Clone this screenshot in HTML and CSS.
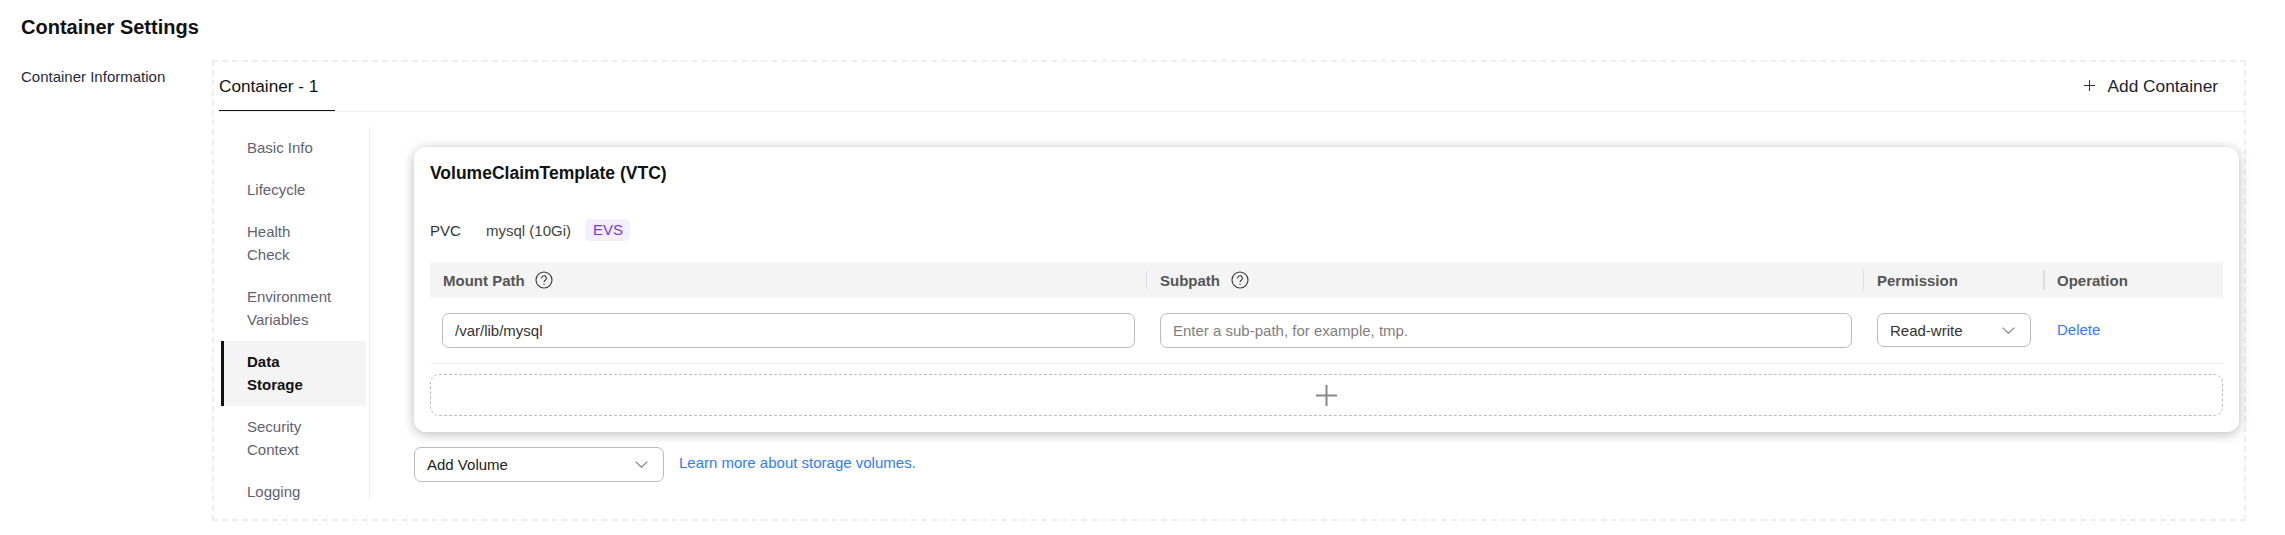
FILE: index.html
```html
<!DOCTYPE html>
<html lang="en">
<head>
<meta charset="utf-8">
<title>Container Settings</title>
<link rel="stylesheet" href="styles.css">
</head>
<body>
<h1 class="page-title">Container Settings</h1>
<div class="form-row">
  <div class="form-label">Container Information</div>
  <div class="box">
    <div class="tabs">
      <div class="tab">Container - 1</div>
      <div class="add-container">
        <svg class="add-icon" viewBox="0 0 11 11"><path d="M5.5 0v11M0 5.5h11"/></svg>
        <span>Add Container</span>
      </div>
    </div>
    <div class="body">
      <ul class="nav">
        <li class="nav-item">Basic Info</li>
        <li class="nav-item">Lifecycle</li>
        <li class="nav-item">Health<br>Check</li>
        <li class="nav-item">Environment<br>Variables</li>
        <li class="nav-item active">Data<br>Storage</li>
        <li class="nav-item">Security<br>Context</li>
        <li class="nav-item">Logging</li>
      </ul>
      <div class="main">
        <div class="card">
          <div class="card-title">VolumeClaimTemplate (VTC)</div>
          <div class="pvc">
            <span class="pvc-label">PVC</span>
            <span class="pvc-name">mysql (10Gi)</span>
            <span class="tag">EVS</span>
          </div>
          <div class="grid head">
            <div class="th th-first">Mount Path
              <svg class="help help-first" viewBox="0 0 18 18"><circle cx="9" cy="9" r="8"/><path d="M6.6 7.2a2.4 2.4 0 1 1 3.7 2c-.9.6-1.3 1-1.3 1.9M9 12.4v1.3"/></svg>
            </div>
            <div class="th">Subpath
              <svg class="help" viewBox="0 0 18 18"><circle cx="9" cy="9" r="8"/><path d="M6.6 7.2a2.4 2.4 0 1 1 3.7 2c-.9.6-1.3 1-1.3 1.9M9 12.4v1.3"/></svg>
            </div>
            <div class="th">Permission</div>
            <div class="th th-strong">Operation</div>
          </div>
          <div class="grid row">
            <div class="td td-first"><div class="field">/var/lib/mysql</div></div>
            <div class="td td-wide"><div class="field placeholder">Enter a sub-path, for example, tmp.</div></div>
            <div class="td"><div class="field select">Read-write
              <svg class="chevron" viewBox="0 0 13 7"><path d="M.6.6l5.9 5.6L12.4.6"/></svg></div></div>
            <div class="td"><a class="link">Delete</a></div>
          </div>
          <div class="add-row">
            <svg class="add-row-icon" viewBox="0 0 21 21"><path d="M10.5 0v21M0 10.5h21"/></svg>
          </div>
        </div>
        <div class="volume-row">
          <div class="field select volume">Add Volume
            <svg class="chevron" viewBox="0 0 13 7"><path d="M.6.6l5.9 5.6L12.4.6"/></svg></div>
          <a class="link learn">Learn more about storage volumes.</a>
        </div>
      </div>
    </div>
  </div>
</div>
</body>
</html>
```
FILE: styles.css
```css
* { box-sizing: border-box; }
html, body { margin: 0; padding: 0; background: #fff; }
body {
  font-family: "Liberation Sans", Arial, sans-serif;
  font-size: 15px;
  color: #333;
  height: 535px;
  overflow: hidden;
}
.page-title {
  margin: 0;
  padding: 16px 0 0 21px;
  height: 60px;
  font-size: 20px;
  line-height: 22px;
  font-weight: 700;
  color: #111;
}
.form-row { display: flex; padding-left: 21px; }
.form-label {
  width: 191px;
  padding-top: 7px;
  line-height: 20px;
  color: #252b3a;
}
.box {
  width: 2034px;
  height: 461px;
  border: 2px dashed #eee;
}
.tabs {
  display: flex;
  justify-content: space-between;
  height: 50px;
  margin-left: 5px;
  border-bottom: 1px solid #eee;
}
.tab {
  width: 116px;
  height: 49px;
  padding-top: 12px;
  font-size: 17.2px;
  line-height: 24px;
  color: #111;
  border-bottom: 1px solid #111;
}
.add-container {
  display: flex;
  align-items: flex-start;
  padding: 12px 26px 0 0;
  font-size: 17.3px;
  line-height: 24px;
  color: #1c2233;
}
.add-icon {
  width: 11px;
  height: 11px;
  margin: 6px 13px 0 0;
  fill: none;
  stroke: #333;
  stroke-width: 1;
}
.body { display: flex; margin-top: 15px; }
.nav {
  list-style: none;
  margin: 0 0 0 7px;
  padding: 0 3px 0 0;
  width: 149px;
  height: 373px;
  overflow: hidden;
  border-right: 1px solid #eee;
}
.nav-item {
  padding: 8.5px 10px 10.5px 26px;
  line-height: 23px;
  color: #5f6270;
}
.nav-item.active {
  background: #f4f4f4;
  border-left: 3px solid #111;
  padding-left: 23px;
  font-weight: 700;
  color: #111;
}
.main { margin: 20px 0 0 44px; width: 1825px; }
.card {
  height: 285px;
  padding: 16px;
  border-radius: 12px;
  background: #fff;
  box-shadow: 0 2px 12px rgba(0, 0, 0, .28);
}
.card-title {
  font-size: 17.5px;
  line-height: 20px;
  font-weight: 700;
  color: #111;
}
.pvc {
  display: flex;
  align-items: center;
  height: 22px;
  margin: 36px 0 21px;
}
.pvc-label { width: 56px; color: #333; }
.pvc-name { width: 99px; color: #444; }
.tag {
  width: 45px;
  height: 22px;
  padding-left: 8px;
  line-height: 22px;
  border-radius: 5px;
  background: #f5effd;
  color: #7a38d8;
}
.grid {
  display: grid;
  grid-template-columns: 716px 717px 180px 180px;
}
.head {
  height: 36px;
  align-items: center;
  background: #f4f4f4;
}
.th {
  display: flex;
  align-items: center;
  height: 20px;
  padding-left: 13px;
  border-left: 1px solid #ddd;
  font-weight: 700;
  color: #555;
}
.th-first { border-left: 0; }
.th-strong { border-left: 2px solid #ddd; padding-left: 12px; }
.help {
  width: 18px;
  height: 18px;
  margin-left: 11px;
  fill: none;
  stroke: #333;
  stroke-width: 1.1;
}
.help-first { margin-left: 10px; }
.row {
  height: 66px;
  padding-top: 15px;
  border-bottom: 1px solid #eee;
}
.td { padding: 0 12px 0 14px; }
.td-wide { padding-right: 11px; }
.td-first { padding: 0 11px 0 12px; }
.field {
  display: flex;
  align-items: center;
  height: 35px;
  padding: 0 12px;
  border: 1px solid #bbb;
  border-radius: 7px;
  color: #333;
}
.placeholder { color: #808080; }
.select {
  justify-content: space-between;
  height: 34px;
  padding-right: 15px;
}
.chevron {
  width: 13px;
  height: 7px;
  fill: none;
  stroke: #888;
  stroke-width: 1.3;
}
.link { color: #2f7bff; line-height: 34px; }
.add-row {
  display: flex;
  align-items: center;
  justify-content: center;
  height: 42px;
  margin-top: 10px;
  border: 1px dashed #bbb;
  border-radius: 9px;
}
.add-row-icon {
  width: 21px;
  height: 21px;
  fill: none;
  stroke: #888;
  stroke-width: 2;
}
.volume-row {
  display: flex;
  align-items: flex-start;
  margin-top: 15px;
}
.volume {
  width: 250px;
  height: 35px;
  color: #222;
  padding-left: 12px;
  padding-right: 15px;
}
.learn { margin-left: 15px; line-height: 32px; }
```
